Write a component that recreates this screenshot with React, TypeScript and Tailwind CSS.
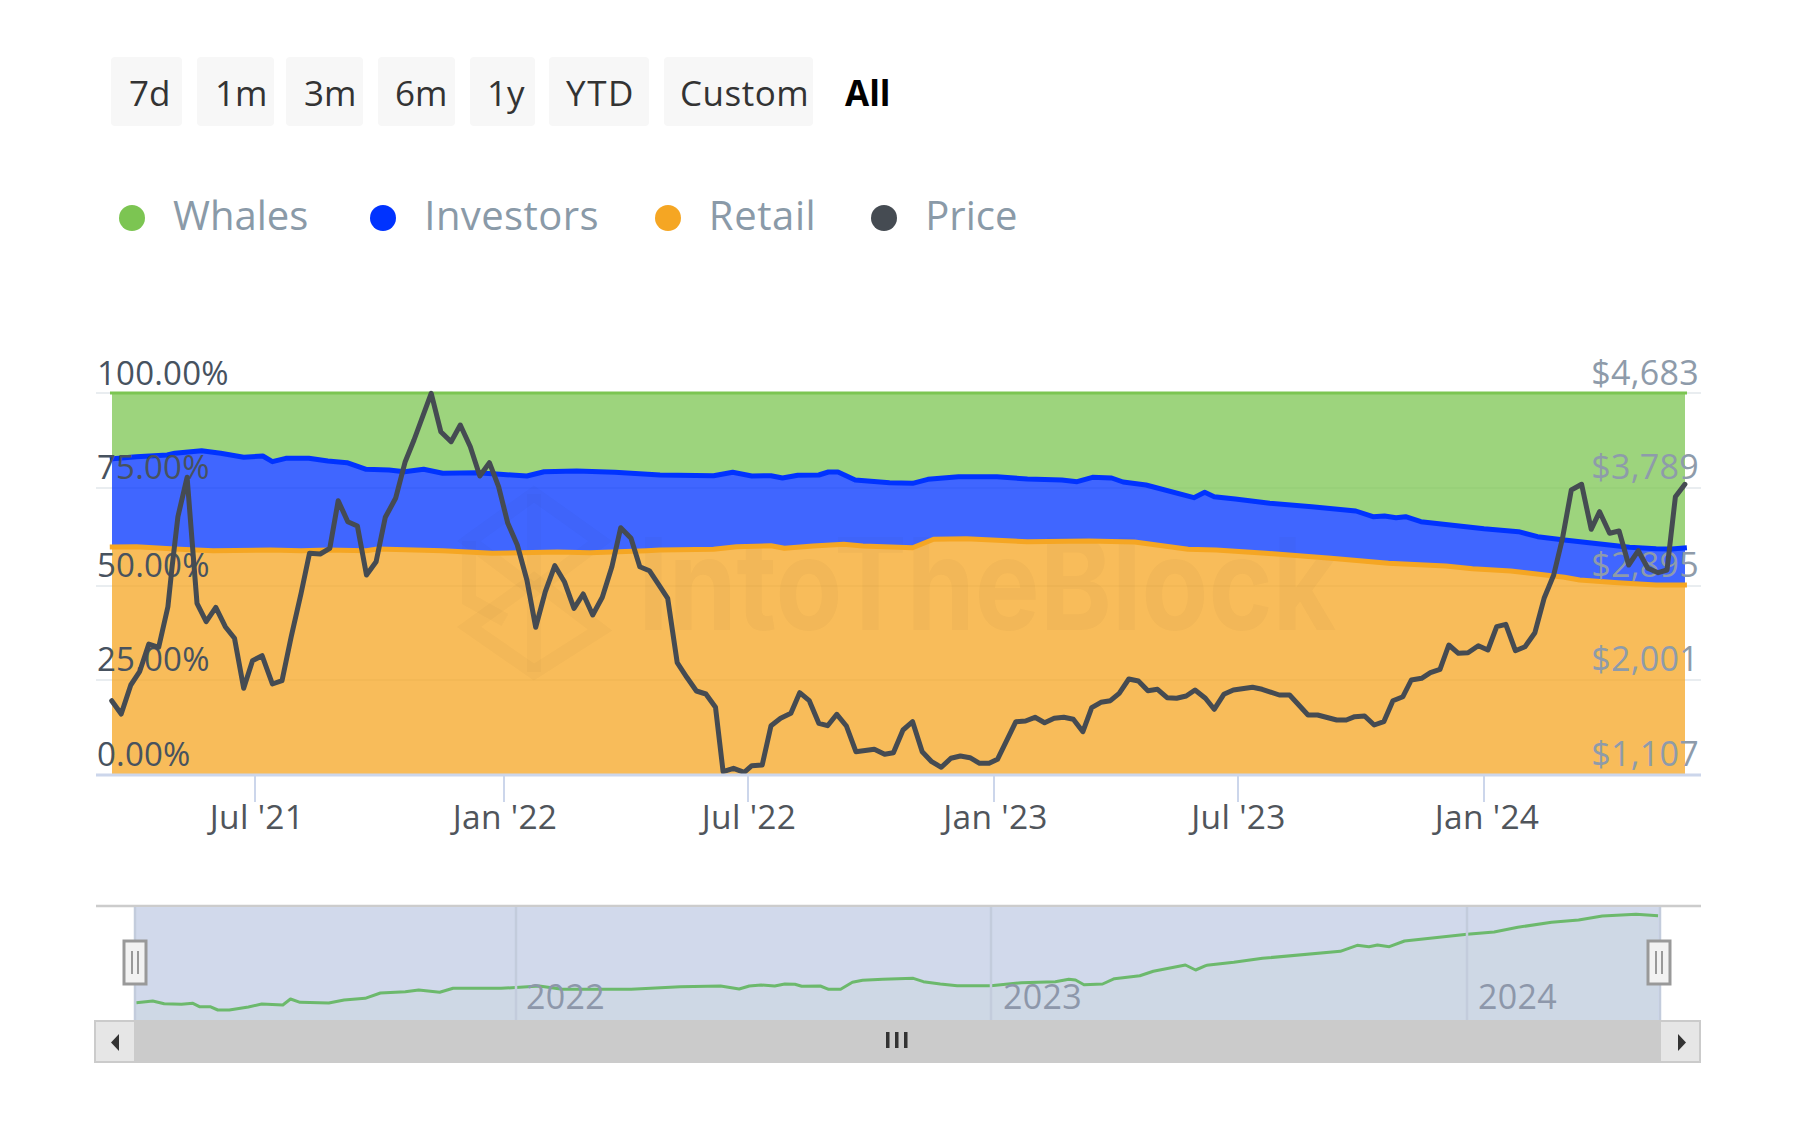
import React from "react";

type P = [number, number];
const z2 = (a: P[]): P[] => a.map(([x, y]) => [60 + x / 2.613, 340 + y / 3]);
const z3 = (a: P[]): P[] => a.map(([x, y]) => [660 + x / 2.613, 340 + y / 3]);
const z4 = (a: P[]): P[] => a.map(([x, y]) => [1197 + x / 2.613, 340 + y / 3]);
const z7 = (a: P[]): P[] => a.map(([x, y]) => [440 + x / 3, 480 + y / 3]);
const n5 = (a: P[]): P[] => a.map(([x, y]) => [80 + x / 2.613, 890 + y / 3]);
const n8 = (a: P[]): P[] => a.map(([x, y]) => [680 + x / 2.958, 890 + y / 3]);
const n6 = (a: P[]): P[] => a.map(([x, y]) => [1200 + x / 2.958, 890 + y / 3]);
const d = (a: P[]) => a.map(([x, y], i) => `${i ? "L" : "M"}${x.toFixed(1)} ${y.toFixed(1)}`).join(" ");
const rev = (a: P[]) => [...a].reverse();

const price: P[] = [
  ...z2([[135,1082],[160,1122],[185,1035],[208,995],[232,912],[258,922],[282,800],[293,680],[308,530],[332,412],[345,600],[358,790],[382,845],[407,802],[432,860],[456,895],[480,1045],[503,962],[528,947],[555,1032],[580,1022],[604,890],[630,760],[652,640],[680,642],[705,625],[727,482],[752,545],[777,558],[801,705],[826,665],[850,532],[877,475],[902,365],[925,300],[970,160],[995,275],[1022,305],[1046,255],[1072,320],[1097,408],[1122,368],[1146,440],[1170,550],[1195,615],[1220,720],[1243,862],[1268,755],[1293,677],[1318,725],[1343,805],[1367,762],[1392,825],[1417,772],[1442,680],[1465,563],[1492,595],[1515,680],[1540,692]]),
  ...z3([[0,740],[20,775],[45,968],[70,1012],[95,1053],[120,1062],[145,1102],[165,1295],[192,1285],[220,1297],[240,1277],[267,1275],[290,1157],[315,1135],[342,1120],[365,1058],[390,1082],[415,1150],[438,1157],[462,1123],[487,1158],[512,1235],[560,1228],[587,1243],[610,1238],[635,1170],[660,1145],[685,1235],[710,1265],[735,1282],[760,1255],[785,1248],[810,1253],[835,1270],[860,1270],[882,1258],[930,1145],[955,1143],[980,1132],[1005,1148],[1030,1135],[1055,1132],[1080,1138],[1105,1175],[1128,1103],[1152,1087],[1177,1082],[1200,1060],[1225,1017],[1250,1023],[1275,1052],[1300,1048],[1325,1073],[1350,1075],[1375,1068],[1398,1050]]),
  ...z4([[22,1075],[45,1108],[70,1063],[95,1050],[145,1042],[170,1048],[215,1065],[242,1065],[290,1125],[315,1125],[365,1140],[390,1140],[412,1130],[438,1128],[463,1155],[488,1145],[512,1082],[538,1070],[560,1020],[587,1015],[610,998],[635,988],[658,915],[683,940],[708,938],[735,917],[760,930],[783,860],[807,853],[832,932],[857,920],[883,878],[907,775],[932,705],[955,595],[978,450],[1005,433],[1030,568],[1052,515],[1078,580],[1103,573],[1128,675],[1153,632],[1178,685],[1205,698],[1228,690],[1250,470],[1275,433]]),
];

const blue: P[] = [
  ...z2([[130,357],[200,350],[280,345],[300,340],[370,332],[420,340],[480,352],[530,348],[555,365],[590,355],[650,355],[700,363],[750,368],[800,388],[860,390],[900,395],[950,388],[1000,400],[1090,398],[1150,403],[1220,408],[1265,395],[1350,393],[1450,397]]),
  ...z3([[0,405],[140,407],[190,397],[240,408],[290,407],[320,414],[360,406],[415,405],[440,396],[465,396],[510,420],[600,428],[660,430],[700,418],[780,410],[880,410],[960,417],[1050,420],[1090,425],[1130,412],[1180,414],[1210,426],[1270,435],[1395,473]]),
  ...z4([[20,457],[45,470],[100,477],[190,490],[300,500],[415,513],[460,530],[490,528],[520,533],[545,530],[585,545],[750,566],[840,575],[890,590],[960,600],[1130,622],[1200,626],[1240,627],[1280,623]]),
];

const orange: P[] = [
  ...z2([[130,621],[200,620],[300,627],[400,632],[550,630],[630,632],[700,630],[800,632],[830,627],[1000,632],[1130,640],[1300,636]]),
  ...z7([[450,218],[620,212]]),
  ...z3([[0,630],[140,628],[200,620],[290,617],[325,625],[400,618],[480,613],[530,618],[660,623],[715,598],[800,596],[960,605],[1120,603],[1240,606],[1380,628]]),
  ...z4([[50,630],[180,640],[350,655],[500,670],[650,678],[720,686],[820,693],[960,712],[1000,720],[1100,728],[1200,735],[1280,735]]),
];

const nav: P[] = [
  ...n5([[147,338],[190,333],[220,341],[265,343],[295,340],[312,350],[340,350],[360,360],[390,360],[440,351],[475,342],[530,345],[550,327],[575,337],[650,339],[690,330],[745,325],[785,309],[850,305],[885,300],[940,307],[975,295],[1100,295],[1200,288],[1260,298],[1440,298],[1568,290]]),
  ...n8([[120,288],[175,297],[205,288],[240,285],[280,288],[310,282],[340,283],[360,289],[415,288],[440,298],[475,298],[510,277],[540,271],[600,268],[690,265],[720,275],[770,282],[820,287],[920,287],[1010,278],[1110,275],[1150,268],[1170,270],[1195,284],[1250,282],[1285,266],[1360,257],[1400,244],[1495,225],[1525,240],[1555,227]]),
  ...n6([[20,226],[100,217],[185,205],[415,184],[465,166],[500,170],[525,165],[560,170],[605,153],[790,133],[870,126],[940,112],[1040,97],[1120,90],[1190,78],[1290,73],[1355,77]]),
];

const buttons = [
  { t: "7d", c: "w-[71px] pl-[18px]" },
  { t: "1m", c: "w-[77px] ml-[15px] pl-[18px]" },
  { t: "3m", c: "w-[77px] ml-[12px] pl-[18px]" },
  { t: "6m", c: "w-[77px] ml-[15px] pl-[17px]" },
  { t: "1y", c: "w-[65px] ml-[15px] pl-[17px]" },
  { t: "YTD", c: "w-[100px] ml-[14px] pl-[17px] tracking-[1.6px]" },
  { t: "Custom", c: "w-[149px] ml-[15px] pl-[16px] tracking-[0.5px]" },
];

const legend = [
  { t: "Whales", dot: "bg-[#7cc552]", c: "", s: "" },
  { t: "Investors", dot: "bg-[#0033ff]", c: "ml-[62px]", s: "tracking-[0.4px]" },
  { t: "Retail", dot: "bg-[#f5a623]", c: "ml-[56px]", s: "tracking-[0.6px]" },
  { t: "Price", dot: "bg-[#454b52]", c: "ml-[55px]", s: "" },
];

const yLabels: [string, string, number][] = [
  ["100.00%", "$4,683", 384.5],
  ["75.00%", "$3,789", 478.5],
  ["50.00%", "$2,895", 577],
  ["25.00%", "$2,001", 670.5],
  ["0.00%", "$1,107", 765.5],
];
const xLabels: [string, number][] = [
  ["Jul '21", 257],
  ["Jan '22", 505],
  ["Jul '22", 749],
  ["Jan '23", 995.5],
  ["Jul '23", 1238.5],
  ["Jan '24", 1487],
];
const years: [string, number][] = [["2022", 526], ["2023", 1003], ["2024", 1478]];

export default function App() {
  return (
    <div className="w-[1797px] h-[1146px] bg-white overflow-hidden font-['Open_Sans',sans-serif]">
      <div className="flex items-center pt-[57px] pl-[111px] h-[126px]">
        {buttons.map((b) => (
          <div key={b.t} className={`${b.c} h-[69px] flex items-center pt-[4px] bg-[#f7f7f7] rounded-[4px] text-[35px] text-[#333333]`}>
            {b.t}
          </div>
        ))}
        <div className="ml-[32px] h-[69px] flex items-center pt-[4px] text-[35px] font-bold text-black">All</div>
      </div>
      <div className="flex items-center pl-[119px] mt-[62px] h-[54px]">
        {legend.map((l) => (
          <div key={l.t} className={`${l.c} flex items-center`}>
            <span className={`${l.dot} w-[26px] h-[26px] rounded-full mt-[6px]`} />
            <span className={`${l.s} ml-[28px] text-[40px] leading-[54px] text-[#8a9aa8]`}>{l.t}</span>
          </div>
        ))}
      </div>
      <svg className="block mt-[98px]" width={1797} height={740} viewBox="0 340 1797 740">
        <defs>
          <clipPath id="plot">
            <rect x={112} y={392} width={1573} height={383} />
          </clipPath>
        </defs>
        {[393, 488, 586, 680].map((y) => (
          <line key={y} x1={96} x2={1701} y1={y} y2={y} stroke="#e9edf0" strokeWidth={2} />
        ))}
        <g clipPath="url(#plot)">
          <path d={`M112 393 L1685 393 ${d(rev(blue)).replace("M", "L")} Z`} fill="#7cc552" fillOpacity={0.75} />
          <path d={`${d(blue)} ${d(rev(orange)).replace("M", "L")} Z`} fill="#0033ff" fillOpacity={0.75} />
          <path d={`${d(orange)} L1690 775 L100 775 Z`} fill="#f5a623" fillOpacity={0.75} />
        </g>
        {/* watermark */}
        <g fill="none" stroke="#333333" strokeOpacity={0.022} strokeWidth={14}>
          <path d="M469 541 L534 494 L600 541 L534 590 Z" />
          <path d="M534 494 L534 590" />
          <path d="M469 541 L469 600 L505 620" />
          <path d="M469 627 L534 580 L600 630 L534 672 Z" />
          <path d="M534 600 L534 672" />
        </g>
        <text x={638} y={630} textLength={698} lengthAdjust="spacingAndGlyphs" className="text-[128px] font-bold font-['Inter',sans-serif] fill-[#333333]" fillOpacity={0.028}>
          IntoTheBlock
        </text>
        <path d={d(orange)} fill="none" stroke="#f5a623" strokeWidth={5} strokeLinejoin="round" />
        <path d={d(blue)} fill="none" stroke="#0033ff" strokeWidth={5} strokeLinejoin="round" />
        <line x1={110} x2={1687} y1={393} y2={393} stroke="#7cc552" strokeWidth={3} />
        {yLabels.map(([l, r, y]) => (
          <g key={l}>
            <text x={97} y={y} className="text-[33px] tracking-[0.2px] fill-[#47525f]">{l}</text>
            <text x={1699} y={y} textAnchor="end" className="text-[34px] tracking-[0.3px] fill-[#8e9baa]">{r}</text>
          </g>
        ))}
        <path d={d(price)} fill="none" stroke="#454b52" strokeWidth={5} strokeLinejoin="round" strokeLinecap="round" />
        <line x1={96} x2={1701} y1={775} y2={775} stroke="#ccd6eb" strokeWidth={3} />
        {[255, 504, 748, 994, 1238, 1484].map((x) => (
          <line key={x} x1={x} x2={x} y1={775} y2={802} stroke="#ccd6eb" strokeWidth={2} />
        ))}
        {xLabels.map(([t, x]) => (
          <text key={t} x={x} y={828.5} textAnchor="middle" className="text-[33.5px] tracking-[0.3px] fill-[#50555b]">{t}</text>
        ))}

        {/* navigator */}
        <line x1={96} x2={1701} y1={906} y2={906} stroke="#cccccc" strokeWidth={2.5} />
        <rect x={135} y={907} width={1525} height={113} fill="#d1d9eb" />
        <path d={`${d(nav)} L1658 1020 L136 1020 Z`} fill="#c8d8d8" fillOpacity={0.3} />
        <path d={d(nav)} fill="none" stroke="#6cb96c" strokeWidth={3} strokeLinejoin="round" />
        {[135, 516, 991, 1467, 1660].map((x) => (
          <line key={x} x1={x} x2={x} y1={907} y2={1020} stroke="#c3ccdc" strokeWidth={2.5} />
        ))}
        {years.map(([t, x]) => (
          <text key={t} x={x} y={1009} className="text-[34px] tracking-[0.3px] fill-[#8d97aa]">{t}</text>
        ))}
        <rect x={94} y={1020} width={1607} height={43} fill="#cbcbcb" />
        <rect x={96} y={1022} width={38} height={39} fill="#e6e6e6" />
        <rect x={1661} y={1022} width={38} height={39} fill="#e6e6e6" />
        <path d="M119 1034 L111 1042.5 L119 1051 Z" fill="#333333" />
        <path d="M1678 1034 L1686 1042.5 L1678 1051 Z" fill="#333333" />
        <g fill="#333333">
          <rect x={886} y={1032} width={3.5} height={16} />
          <rect x={895} y={1032} width={3.5} height={16} />
          <rect x={904} y={1032} width={3.5} height={16} />
        </g>
        {[124, 1648].map((x) => (
          <g key={x}>
            <rect x={x} y={941} width={22} height={43} fill="#f2f2f2" stroke="#999999" strokeWidth={3} />
            <line x1={x + 8} x2={x + 8} y1={951} y2={974} stroke="#999999" strokeWidth={2} />
            <line x1={x + 14} x2={x + 14} y1={951} y2={974} stroke="#999999" strokeWidth={2} />
          </g>
        ))}
      </svg>
    </div>
  );
}
